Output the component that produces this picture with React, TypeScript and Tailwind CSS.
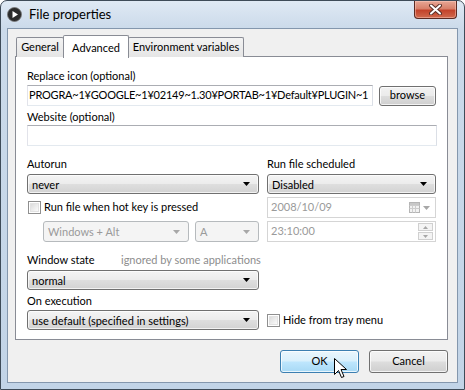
import React from 'react';

const Arrow = ({ disabled = false }: { disabled?: boolean }) => (
    <svg width="7" height="4" viewBox="0 0 7 4" className="shrink-0">
        <polygon points="0,0 7,0 3.5,4" fill={disabled ? '#a7a7a7' : '#000'} />
    </svg>
);

interface ComboProps {
    value: string;
    className?: string;
    disabled?: boolean;
}

const Combo: React.FC<ComboProps> = ({ value, className = '', disabled = false }) => (
    <div
        className={`h-[20px] flex items-center justify-between pl-[4px] pr-[8px] rounded-[3px] border ${
            disabled
                ? 'border-[#b6babd] bg-[#f4f4f4] text-[#9a9a9a]'
                : 'border-[#707070] bg-[linear-gradient(#f4f4f4_0%,#ececec_48%,#dedede_52%,#d2d2d2_100%)] text-black shadow-[inset_0_0_0_1px_rgba(255,255,255,0.7)]'
        } ${className}`}
    >
        <span className="whitespace-nowrap leading-none">{value}</span>
        <Arrow disabled={disabled} />
    </div>
);

const CheckBox = ({ label }: { label: string }) => (
    <div className="flex items-center gap-[3px]">
        <div className="w-[13px] h-[13px] border border-[#8f8f8f] bg-white p-[1px]">
            <div className="w-full h-full bg-[linear-gradient(135deg,#dcdcdc,#fbfbfb)] border border-[#e2e2e2]" />
        </div>
        <span className="whitespace-nowrap">{label}</span>
    </div>
);

const Button = ({ label, hover = false, className = '' }: { label: string; hover?: boolean; className?: string }) => (
    <div
        className={`flex items-center justify-center rounded-[3px] border shadow-[inset_0_0_0_1px_rgba(255,255,255,0.75)] ${
            hover
                ? 'border-[#3c7fb1] bg-[linear-gradient(#eaf6fd_0%,#d9f0fc_48%,#bee6fd_52%,#a7d9f5_100%)]'
                : 'border-[#707070] bg-[linear-gradient(#f2f2f2_0%,#ebebeb_48%,#dddddd_52%,#cfcfcf_100%)]'
        } ${className}`}
    >
        {label}
    </div>
);

export default function App() {
    return (
        <div className="w-[465px] h-[390px] bg-white text-[11px] text-black font-['Lato','Noto_Sans',sans-serif]">
            <div className="w-full h-full flex flex-col rounded-t-[7px] border border-[#3e4b58] bg-[linear-gradient(#dfe9f4_0px,#cbdaea_28px,#c2d4e7_100%)] px-[6px] pb-[6px]">
                {/* Title bar */}
                <div className="h-[27px] flex items-start justify-between">
                    <div className="flex items-center gap-[7px] pt-[6px]">
                        <svg width="15" height="15" viewBox="0 0 15 15">
                            <circle cx="7.5" cy="7.5" r="7" fill="#2b2b2b" stroke="#777" strokeWidth="0.8" />
                            <polygon points="5.5,4 11,7.5 5.5,11" fill="#fff" />
                        </svg>
                        <span className="text-[13px] leading-none text-black">File properties</span>
                    </div>
                    <div className="w-[43px] h-[18px] mr-[1px] rounded-b-[4px] border border-t-0 border-[#5b2a22] bg-[linear-gradient(#e8a795_0%,#d8806a_45%,#c3432b_55%,#d06a4e_100%)] flex items-center justify-center shadow-[inset_0_0_0_1px_rgba(255,210,200,0.45)]">
                        <svg width="13" height="11" viewBox="0 0 13 11">
                            <path d="M2 1.5 L11 9.5 M11 1.5 L2 9.5" stroke="#5a3028" strokeWidth="4" strokeLinecap="round" />
                            <path d="M2 1.5 L11 9.5 M11 1.5 L2 9.5" stroke="#fff" strokeWidth="2" strokeLinecap="round" />
                        </svg>
                    </div>
                </div>

                {/* Client area */}
                <div className="flex-1 flex flex-col border border-[#8497ad] bg-[#f0f0f0] pt-[6px] pl-[7px] pr-[9px]">
                    {/* Tabs */}
                    <div className="flex items-end h-[22px] pl-[1px] relative z-10 whitespace-nowrap">
                        <div className="w-[48px] h-[20px] flex items-center justify-center border border-b-0 border-[#898c95] rounded-t-[2px] bg-[linear-gradient(#f3f3f3,#e5e5e5)]">
                            General
                        </div>
                        <div className="w-[66px] h-[23px] -ml-[1px] -mb-px flex items-start pt-[4px] justify-center border border-b-0 border-[#898c95] rounded-t-[2px] bg-white">
                            Advanced
                        </div>
                        <div className="w-[116px] h-[20px] -ml-[1px] flex items-center justify-center border border-b-0 border-[#898c95] rounded-t-[2px] bg-[linear-gradient(#f3f3f3,#e5e5e5)]">
                            Environment variables
                        </div>
                    </div>

                    {/* Panel */}
                    <div className="h-[284px] -mt-px border border-[#898c95] bg-white pt-[11px] pl-[11px] pr-[10px] flex flex-col">
                        <div className="h-[16px] leading-[16px]">Replace icon (optional)</div>
                        <div className="flex items-center gap-[6px] mt-[1px]">
                            <div className="w-[346px] h-[21px] border border-[#abadb3] border-l-[#e2e3ea] border-b-[#e3e9ef] border-r-[#dbdfe6] bg-white flex items-center overflow-hidden pl-[1px] whitespace-nowrap">
                                <span className="tracking-[-0.22px]">PROGRA~1¥GOOGLE~1¥02149~1.30¥PORTAB~1¥Default¥PLUGIN~1</span>
                            </div>
                            <Button label="browse" className="w-[57px] h-[20px]" />
                        </div>

                        <div className="h-[16px] leading-[16px] mt-[3px]">Website (optional)</div>
                        <div className="h-[21px] border border-[#abadb3] border-l-[#e2e3ea] border-b-[#e3e9ef] border-r-[#dbdfe6] bg-white" />

                        <div className="grid grid-cols-[232px_169px] gap-x-[8px] mt-[10px]">
                            <div className="h-[16px] leading-[16px]">Autorun</div>
                            <div className="h-[16px] leading-[16px]">Run file scheduled</div>

                            <Combo value="never" className="mt-[2px]" />
                            <Combo value="Disabled" className="mt-[2px]" />

                            <div className="mt-[3px] h-[21px] flex items-center pl-[1px]">
                                <CheckBox label="Run file when hot key is pressed" />
                            </div>
                            <div className="mt-[3px] h-[21px] border border-[#d5d5d5] bg-white flex items-center justify-between pl-[3px] pr-[5px] text-[#9a9a9a]">
                                <span>2008/10/09</span>
                                <div className="flex items-center gap-[3px]">
                                    <svg width="11" height="11" viewBox="0 0 11 11">
                                        <rect x="0.5" y="0.5" width="10" height="10" fill="#f2f2f2" stroke="#b5b5b5" />
                                        <path d="M0.5 3.5 H10.5 M0.5 6.5 H10.5 M3.5 3.5 V10.5 M6.5 3.5 V10.5" stroke="#cdcdcd" />
                                        <rect x="1" y="1" width="9" height="2" fill="#c8c8c8" />
                                    </svg>
                                    <Arrow disabled />
                                </div>
                            </div>

                            <div className="mt-[3px] flex gap-[6px] pl-[16px]">
                                <Combo value="Windows + Alt" disabled className="w-[146px] h-[21px]" />
                                <Combo value="A" disabled className="w-[64px] h-[21px]" />
                            </div>
                            <div className="mt-[3px] h-[21px] border border-[#d5d5d5] bg-white flex items-center justify-between pl-[3px] pr-[2px] text-[#9a9a9a]">
                                <span>23:10:00</span>
                                <div className="flex flex-col gap-px">
                                    <div className="w-[15px] h-[8px] border border-[#d0d0d0] bg-[#f4f4f4] flex items-center justify-center">
                                        <svg width="5" height="3" viewBox="0 0 5 3"><polygon points="0,3 5,3 2.5,0" fill="#a7a7a7" /></svg>
                                    </div>
                                    <div className="w-[15px] h-[8px] border border-[#d0d0d0] bg-[#f4f4f4] flex items-center justify-center">
                                        <svg width="5" height="3" viewBox="0 0 5 3"><polygon points="0,0 5,0 2.5,3" fill="#a7a7a7" /></svg>
                                    </div>
                                </div>
                            </div>

                            <div className="mt-[10px] h-[16px] leading-[16px] flex whitespace-nowrap col-span-2">
                                <span className="w-[94px]">Window state</span>
                                <span className="text-[#8d8d8d]">ignored by some applications</span>
                            </div>
                            <Combo value="normal" className="mt-[2px] col-start-1" />
                            <div />

                            <div className="h-[16px] leading-[16px] mt-[3px] col-start-1">On execution</div>
                            <div />
                            <Combo value="use default (specified in settings)" className="mt-[1px]" />
                            <div className="mt-[1px] h-[20px] flex items-center">
                                <CheckBox label="Hide from tray menu" />
                            </div>
                        </div>
                    </div>

                    {/* Bottom buttons */}
                    <div className="flex justify-end gap-[10px] mt-[10px]">
                        <div className="relative">
                            <Button label="OK" hover className="w-[79px] h-[23px]" />
                            <svg width="13" height="21" viewBox="0 0 13 21" className="absolute left-[54px] top-[8px]">
                                <path d="M0.5 0.5 V16.5 L4.5 12.5 L7.5 19.5 L10 18.5 L7 11.5 H12.5 Z" fill="#fff" stroke="#000" strokeLinejoin="round" />
                            </svg>
                        </div>
                        <Button label="Cancel" className="w-[79px] h-[23px]" />
                    </div>
                </div>
            </div>
        </div>
    );
}
